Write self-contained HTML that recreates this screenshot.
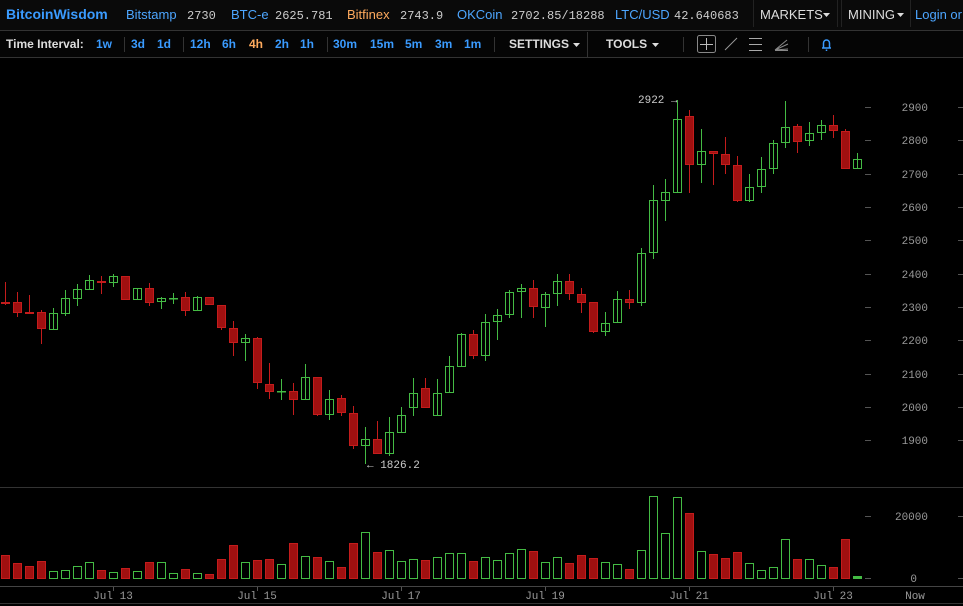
<!DOCTYPE html>
<html><head><meta charset="utf-8"><style>
html,body{margin:0;padding:0;background:#000;width:963px;height:606px;overflow:hidden}
svg{display:block}
.m{font-family:"Liberation Mono","DejaVu Sans Mono",monospace}
.s{font-family:"Liberation Sans","DejaVu Sans",sans-serif}
</style></head><body>
<svg width="963" height="606" viewBox="0 0 963 606" xmlns="http://www.w3.org/2000/svg">
<rect width="963" height="606" fill="#000"/>
<rect width="963" height="30" fill="#0a0a0a"/>
<rect y="31" width="963" height="26" fill="#050505"/>
<line x1="0" y1="30.5" x2="963" y2="30.5" stroke="#333"/>
<line x1="0" y1="57.5" x2="963" y2="57.5" stroke="#333"/>
<g class="s" font-size="13">
<text x="6" y="19" fill="#3a9bff" font-weight="bold" font-size="14">BitcoinWisdom</text>
<text x="126" y="19" fill="#4da6ff">Bitstamp</text>
<text x="231" y="19" fill="#4da6ff">BTC-e</text>
<text x="347" y="19" fill="#ffab5e">Bitfinex</text>
<text x="457" y="19" fill="#4da6ff">OKCoin</text>
<text x="615" y="19" fill="#4da6ff">LTC/USD</text>
<text x="760" y="19" fill="#ddd">MARKETS</text>
<text x="848" y="19" fill="#ddd">MINING</text>
<text x="915" y="19" fill="#4da6ff">Login or R</text>
</g>
<g class="m" font-size="12" fill="#ccc">
<text x="187" y="19">2730</text>
<text x="275" y="19">2625.781</text>
<text x="400" y="19">2743.9</text>
<text x="511" y="19">2702.85/18288</text>
<text x="674" y="19">42.640683</text>
</g>
<path d="M753.5 0V27M837.5 0V27M841.5 0V27M910.5 0V27" stroke="#222"/>
<path d="M823 13h7l-3.5 4z M897 13h7l-3.5 4z" fill="#ddd"/>
<g class="s" font-size="12" font-weight="bold">
<text x="6" y="48" fill="#ddd">Time Interval:</text>
<g fill="#3a9bff">
<text x="96" y="48">1w</text><text x="131" y="48">3d</text><text x="157" y="48">1d</text>
<text x="190" y="48">12h</text><text x="222" y="48">6h</text><text x="275" y="48">2h</text><text x="300" y="48">1h</text>
<text x="333" y="48">30m</text><text x="370" y="48">15m</text><text x="405" y="48">5m</text><text x="435" y="48">3m</text><text x="464" y="48">1m</text>
</g>
<text x="249" y="48" fill="#ffab5e">4h</text>
<text x="509" y="48" fill="#ddd">SETTINGS</text>
<text x="606" y="48" fill="#ddd">TOOLS</text>
</g>
<path d="M573 43h7l-3.5 4z M652 43h7l-3.5 4z" fill="#ddd"/>
<path d="M124.5 37V52M183.5 37V52M327.5 37V52M494.5 37V52M587.5 32V57M683.5 37V52M808.5 37V52" stroke="#333"/>
<rect x="697.5" y="35.5" width="18" height="17" rx="2" fill="none" stroke="#888"/>
<path d="M706.5 38v12M700 44.5h13" stroke="#bbb"/>
<path d="M725 50l12-12" stroke="#999"/>
<path d="M749 38.5h13M749 44.5h13M749 50.5h13" stroke="#aaa"/>
<path d="M775 50l12-10M775 50l13-6M775 50l13-1M775 50.5h13" stroke="#888"/>
<path d="M822 48h9M823.5 48v-5a3 3 0 0 1 6 0v5M826.5 49.5v1.5" stroke="#3a9bff" stroke-width="1.5" fill="none"/>
<!-- price axis -->
<g class="m" font-size="11" fill="#999" text-anchor="end">
<text x="928" y="111">2900</text><text x="928" y="144">2800</text><text x="928" y="178">2700</text><text x="928" y="211">2600</text><text x="928" y="244">2500</text><text x="928" y="278">2400</text><text x="928" y="311">2300</text><text x="928" y="344">2200</text><text x="928" y="378">2100</text><text x="928" y="411">2000</text><text x="928" y="444">1900</text>
<text x="928" y="520">20000</text><text x="917" y="582">0</text>
</g>
<path d="M865 107.5h6M865 140.5h6M865 174.5h6M865 207.5h6M865 240.5h6M865 274.5h6M865 307.5h6M865 340.5h6M865 374.5h6M865 407.5h6M865 440.5h6M865 516.5h6M865 578.5h6M958 107.5h5M958 140.5h5M958 174.5h5M958 207.5h5M958 240.5h5M958 274.5h5M958 307.5h5M958 340.5h5M958 374.5h5M958 407.5h5M958 440.5h5M958 516.5h5M958 578.5h5" stroke="#555"/>
<line x1="0" y1="487.5" x2="963" y2="487.5" stroke="#333"/>
<line x1="0" y1="586.5" x2="963" y2="586.5" stroke="#444"/>
<line x1="0" y1="603.5" x2="963" y2="603.5" stroke="#333"/>
<path d="M113.5 587v4M257.5 587v4M401.5 587v4M545.5 587v4M689.5 587v4M833.5 587v4" stroke="#555"/>
<g class="m" font-size="11" fill="#999" text-anchor="middle">
<text x="113" y="599">Jul 13</text><text x="257" y="599">Jul 15</text><text x="401" y="599">Jul 17</text><text x="545" y="599">Jul 19</text><text x="689" y="599">Jul 21</text><text x="833" y="599">Jul 23</text><text x="915" y="599">Now</text>
</g>
<g class="m" font-size="11" fill="#ccc">
<text x="638" y="103">2922 →</text>
<text x="367" y="468">← 1826.2</text>
</g>
<!-- red candles -->
<g stroke="#c41c1c" fill="#a01010">
<path d="M5.5 282V305M17.5 292V317M29.5 295V314M41.5 310V344M101.5 276V294M125.5 276V299M149.5 283V306M185.5 292V316M209.5 297V304M221.5 305V330M233.5 321V356M257.5 337V389M269.5 363V399M293.5 383V415M317.5 377V416M341.5 395V416M353.5 406V449M377.5 421V453M425.5 378V407M473.5 330V359M533.5 280V318M569.5 274V300M581.5 288V313M593.5 302V333M629.5 290V309M689.5 110V193M713.5 151V185M725.5 137V174M737.5 156V202M797.5 124V153M833.5 115V138M845.5 129V168" fill="none"/>
<rect x="1.5" y="302.5" width="8" height="1"/>
<rect x="13.5" y="302.5" width="8" height="10"/>
<rect x="25.5" y="312.5" width="8" height="1"/>
<rect x="37.5" y="312.5" width="8" height="16"/>
<rect x="97.5" y="281.5" width="8" height="1"/>
<rect x="121.5" y="276.5" width="8" height="23"/>
<rect x="145.5" y="288.5" width="8" height="14"/>
<rect x="181.5" y="297.5" width="8" height="13"/>
<rect x="205.5" y="297.5" width="8" height="7"/>
<rect x="217.5" y="305.5" width="8" height="22"/>
<rect x="229.5" y="328.5" width="8" height="14"/>
<rect x="253.5" y="338.5" width="8" height="44"/>
<rect x="265.5" y="384.5" width="8" height="7"/>
<rect x="289.5" y="391.5" width="8" height="8"/>
<rect x="313.5" y="377.5" width="8" height="37"/>
<rect x="337.5" y="398.5" width="8" height="14"/>
<rect x="349.5" y="413.5" width="8" height="32"/>
<rect x="373.5" y="439.5" width="8" height="14"/>
<rect x="421.5" y="388.5" width="8" height="19"/>
<rect x="469.5" y="334.5" width="8" height="21"/>
<rect x="529.5" y="288.5" width="8" height="18"/>
<rect x="565.5" y="281.5" width="8" height="12"/>
<rect x="577.5" y="294.5" width="8" height="8"/>
<rect x="589.5" y="302.5" width="8" height="29"/>
<rect x="625.5" y="299.5" width="8" height="3"/>
<rect x="685.5" y="116.5" width="8" height="48"/>
<rect x="709.5" y="151.5" width="8" height="2"/>
<rect x="721.5" y="154.5" width="8" height="10"/>
<rect x="733.5" y="165.5" width="8" height="35"/>
<rect x="793.5" y="126.5" width="8" height="15"/>
<rect x="829.5" y="125.5" width="8" height="5"/>
<rect x="841.5" y="131.5" width="8" height="37"/>
</g>
<!-- green candles -->
<g stroke="#44bb44" fill="none">
<path d="M53.5 308V330M65.5 290V316M77.5 284V306M89.5 275V290M113.5 274V287M137.5 288V299M161.5 297V309M173.5 293V304M197.5 296V310M245.5 334V361M281.5 379V400M305.5 364V400M329.5 390V420M365.5 427V464M389.5 417V456M401.5 407V433M413.5 378V416M437.5 379V415M449.5 356V393M461.5 333V366M485.5 314V361M497.5 309V340M509.5 290V318M521.5 284V318M545.5 292V327M557.5 274V306M605.5 312V336M617.5 291V322M641.5 248V306M653.5 185V259M665.5 179V221M677.5 100V192M701.5 129V183M749.5 174V202M761.5 157V193M773.5 140V174M785.5 101V148M809.5 122V146M821.5 120V140M857.5 153V168"/>
<rect x="49.5" y="313.5" width="8" height="16"/>
<rect x="61.5" y="298.5" width="8" height="15"/>
<rect x="73.5" y="289.5" width="8" height="9"/>
<rect x="85.5" y="280.5" width="8" height="9"/>
<rect x="109.5" y="276.5" width="8" height="6"/>
<rect x="133.5" y="288.5" width="8" height="11"/>
<rect x="157.5" y="298.5" width="8" height="3"/>
<rect x="169.5" y="298.5" width="8" height="0.5"/>
<rect x="193.5" y="297.5" width="8" height="13"/>
<rect x="241.5" y="338.5" width="8" height="4"/>
<rect x="277.5" y="391.5" width="8" height="0.5"/>
<rect x="301.5" y="377.5" width="8" height="22"/>
<rect x="325.5" y="399.5" width="8" height="15"/>
<rect x="361.5" y="439.5" width="8" height="6"/>
<rect x="385.5" y="432.5" width="8" height="21"/>
<rect x="397.5" y="415.5" width="8" height="17"/>
<rect x="409.5" y="393.5" width="8" height="14"/>
<rect x="433.5" y="393.5" width="8" height="22"/>
<rect x="445.5" y="366.5" width="8" height="26"/>
<rect x="457.5" y="334.5" width="8" height="32"/>
<rect x="481.5" y="322.5" width="8" height="33"/>
<rect x="493.5" y="315.5" width="8" height="6"/>
<rect x="505.5" y="292.5" width="8" height="22"/>
<rect x="517.5" y="288.5" width="8" height="3"/>
<rect x="541.5" y="294.5" width="8" height="13"/>
<rect x="553.5" y="281.5" width="8" height="12"/>
<rect x="601.5" y="323.5" width="8" height="8"/>
<rect x="613.5" y="299.5" width="8" height="23"/>
<rect x="637.5" y="253.5" width="8" height="49"/>
<rect x="649.5" y="200.5" width="8" height="52"/>
<rect x="661.5" y="192.5" width="8" height="8"/>
<rect x="673.5" y="119.5" width="8" height="73"/>
<rect x="697.5" y="151.5" width="8" height="13"/>
<rect x="745.5" y="187.5" width="8" height="13"/>
<rect x="757.5" y="169.5" width="8" height="17"/>
<rect x="769.5" y="143.5" width="8" height="25"/>
<rect x="781.5" y="127.5" width="8" height="15"/>
<rect x="805.5" y="133.5" width="8" height="7"/>
<rect x="817.5" y="125.5" width="8" height="7"/>
<rect x="853.5" y="159.5" width="8" height="9"/>
</g>
<!-- volume red -->
<g fill="#a01010" stroke="#c41c1c">
<rect x="1.5" y="555.5" width="8" height="23"/>
<rect x="13.5" y="563.5" width="8" height="15"/>
<rect x="25.5" y="566.5" width="8" height="12"/>
<rect x="37.5" y="561.5" width="8" height="17"/>
<rect x="97.5" y="570.5" width="8" height="8"/>
<rect x="121.5" y="568.5" width="8" height="10"/>
<rect x="145.5" y="562.5" width="8" height="16"/>
<rect x="181.5" y="569.5" width="8" height="9"/>
<rect x="205.5" y="574.5" width="8" height="4"/>
<rect x="217.5" y="559.5" width="8" height="19"/>
<rect x="229.5" y="545.5" width="8" height="33"/>
<rect x="253.5" y="560.5" width="8" height="18"/>
<rect x="265.5" y="559.5" width="8" height="19"/>
<rect x="289.5" y="543.5" width="8" height="35"/>
<rect x="313.5" y="557.5" width="8" height="21"/>
<rect x="337.5" y="567.5" width="8" height="11"/>
<rect x="349.5" y="543.5" width="8" height="35"/>
<rect x="373.5" y="552.5" width="8" height="26"/>
<rect x="421.5" y="560.5" width="8" height="18"/>
<rect x="469.5" y="561.5" width="8" height="17"/>
<rect x="529.5" y="551.5" width="8" height="27"/>
<rect x="565.5" y="563.5" width="8" height="15"/>
<rect x="577.5" y="555.5" width="8" height="23"/>
<rect x="589.5" y="558.5" width="8" height="20"/>
<rect x="625.5" y="569.5" width="8" height="9"/>
<rect x="685.5" y="513.5" width="8" height="65"/>
<rect x="709.5" y="554.5" width="8" height="24"/>
<rect x="721.5" y="558.5" width="8" height="20"/>
<rect x="733.5" y="552.5" width="8" height="26"/>
<rect x="793.5" y="559.5" width="8" height="19"/>
<rect x="829.5" y="567.5" width="8" height="11"/>
<rect x="841.5" y="539.5" width="8" height="39"/>
</g>
<!-- volume green -->
<g fill="none" stroke="#44bb44">
<rect x="49.5" y="571.5" width="8" height="7"/>
<rect x="61.5" y="570.5" width="8" height="8"/>
<rect x="73.5" y="566.5" width="8" height="12"/>
<rect x="85.5" y="562.5" width="8" height="16"/>
<rect x="109.5" y="572.5" width="8" height="6"/>
<rect x="133.5" y="571.5" width="8" height="7"/>
<rect x="157.5" y="562.5" width="8" height="16"/>
<rect x="169.5" y="573.5" width="8" height="5"/>
<rect x="193.5" y="573.5" width="8" height="5"/>
<rect x="241.5" y="562.5" width="8" height="16"/>
<rect x="277.5" y="564.5" width="8" height="14"/>
<rect x="301.5" y="556.5" width="8" height="22"/>
<rect x="325.5" y="561.5" width="8" height="17"/>
<rect x="361.5" y="532.5" width="8" height="46"/>
<rect x="385.5" y="550.5" width="8" height="28"/>
<rect x="397.5" y="561.5" width="8" height="17"/>
<rect x="409.5" y="559.5" width="8" height="19"/>
<rect x="433.5" y="557.5" width="8" height="21"/>
<rect x="445.5" y="553.5" width="8" height="25"/>
<rect x="457.5" y="553.5" width="8" height="25"/>
<rect x="481.5" y="557.5" width="8" height="21"/>
<rect x="493.5" y="560.5" width="8" height="18"/>
<rect x="505.5" y="553.5" width="8" height="25"/>
<rect x="517.5" y="549.5" width="8" height="29"/>
<rect x="541.5" y="562.5" width="8" height="16"/>
<rect x="553.5" y="557.5" width="8" height="21"/>
<rect x="601.5" y="562.5" width="8" height="16"/>
<rect x="613.5" y="564.5" width="8" height="14"/>
<rect x="637.5" y="550.5" width="8" height="28"/>
<rect x="649.5" y="496.5" width="8" height="82"/>
<rect x="661.5" y="533.5" width="8" height="45"/>
<rect x="673.5" y="497.5" width="8" height="81"/>
<rect x="697.5" y="551.5" width="8" height="27"/>
<rect x="745.5" y="563.5" width="8" height="15"/>
<rect x="757.5" y="570.5" width="8" height="8"/>
<rect x="769.5" y="567.5" width="8" height="11"/>
<rect x="781.5" y="539.5" width="8" height="39"/>
<rect x="805.5" y="559.5" width="8" height="19"/>
<rect x="817.5" y="565.5" width="8" height="13"/>
<rect x="853.5" y="576.5" width="8" height="2" fill="#44bb44"/>
</g>
</svg>
</body></html>
